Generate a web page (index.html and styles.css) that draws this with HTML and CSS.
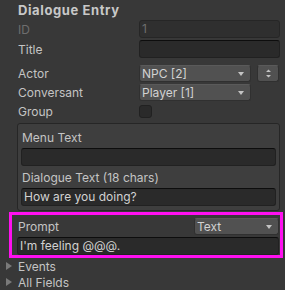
FILE: index.html
```html
<!DOCTYPE html>
<html>
<head>
<meta charset="utf-8">
<link rel="stylesheet" href="styles.css">
</head>
<body>
<div class="panel">
  <div class="header">Dialogue Entry</div>
  <div class="row r-id">
    <div class="label disabled">ID</div>
    <div class="field disabled-field">1</div>
  </div>
  <div class="row r-title">
    <div class="label">Title</div>
    <div class="field"></div>
  </div>
  <div class="row r-actor">
    <div class="label">Actor</div>
    <div class="popup">NPC [2]<span class="arrow"></span></div>
    <div class="spin"><svg width="7" height="9" viewBox="0 0 7 9"><path d="M3.5 0.5 L6 3 L1 3 Z M1 6 L6 6 L3.5 8.5 Z" fill="#c4c4c4"/></svg></div>
  </div>
  <div class="row r-conv">
    <div class="label">Conversant</div>
    <div class="popup">Player [1]<span class="arrow"></span></div>
  </div>
  <div class="row r-group">
    <div class="label">Group</div>
    <div class="check"></div>
  </div>
  <div class="box">
    <div class="blabel">Menu Text</div>
    <div class="field bfield"></div>
    <div class="blabel second">Dialogue Text (18 chars)</div>
    <div class="field bfield">How are you doing?</div>
  </div>
  <div class="highlight">
    <div class="prow">
      <div class="label">Prompt</div>
      <div class="popup small">Text<span class="arrow"></span></div>
    </div>
    <div class="field pfield">I'm feeling @@@.</div>
  </div>
  <div class="fold"><span class="tri"></span>Events</div>
  <div class="fold"><span class="tri"></span>All Fields</div>
</div>
</body>
</html>
```
FILE: styles.css
```css
html, body {
  margin: 0;
  padding: 0;
  background: #383838;
}
body {
  width: 285px;
  height: 290px;
  overflow: hidden;
  font-family: Inter, "Liberation Sans", sans-serif;
  font-size: 12px;
  color: #c4c4c4;
}
.panel {
  display: flex;
  flex-direction: column;
}
.header {
  font-weight: bold;
  font-size: 13px;
  letter-spacing: 0.6px;
  height: 18px;
  line-height: 18px;
  padding-left: 18px;
  margin-top: 1px;
  color: #c8c8c8;
}
.row {
  display: flex;
  align-items: center;
  height: 18px;
  padding-left: 18px;
}
.r-id { margin-top: 1px; }
.r-title { margin-top: 2px; }
.r-actor { margin-top: 6px; }
.r-conv { margin-top: 1px; }
.r-group { margin-top: 3px; height: 15px; }
.label {
  width: 121px;
  flex: none;
}
.label.disabled { color: #6e6e6e; }
.field {
  box-sizing: border-box;
  height: 18px;
  background: #2a2a2a;
  border: 1px solid #212121;
  border-top-color: #0d0d0d;
  border-radius: 3px;
  line-height: 16px;
  padding-left: 2px;
  color: #d2d2d2;
}
.row .field { width: 141px; }
.disabled-field { color: #6e6e6e; background: #2f2f2f; border-color: #262626; }
.popup {
  position: relative;
  box-sizing: border-box;
  width: 112px;
  height: 17px;
  background: #515151;
  border: 1px solid #303030;
  border-top-color: #5a5a5a;
  border-radius: 3px;
  line-height: 15px;
  padding-left: 2px;
  color: #d2d2d2;
}
.arrow {
  position: absolute;
  right: 6px;
  top: 6px;
  width: 0;
  height: 0;
  border-left: 3.5px solid transparent;
  border-right: 3.5px solid transparent;
  border-top: 4px solid #c4c4c4;
}
.spin {
  box-sizing: border-box;
  width: 22px;
  height: 17px;
  margin-left: 6px;
  background: #515151;
  border: 1px solid #303030;
  border-top-color: #5a5a5a;
  border-radius: 3px;
  display: flex;
  align-items: center;
  justify-content: center;
}
.check {
  box-sizing: border-box;
  width: 13px;
  height: 13px;
  background: #2a2a2a;
  border: 1px solid #212121;
  border-radius: 3px;
}
.box {
  margin: 4px 5px 0 17px;
  height: 88px;
  box-sizing: border-box;
  background: #3e3e3e;
  border: 1px solid #262626;
  border-radius: 3px;
  padding: 5px 3px 0 3px;
}
.blabel {
  height: 18px;
  line-height: 18px;
  padding-left: 1px;
}
.blabel.second { margin-top: 3px; }
.bfield { margin-top: 1px; }
.highlight {
  margin: 1px 2px 0 9px;
  height: 46px;
  box-sizing: border-box;
  border: 3px solid #ff10f0;
  padding: 3px 0 0 5px;
}
.prow {
  display: flex;
  justify-content: space-between;
  align-items: center;
  height: 17px;
  padding-left: 1px;
  margin-right: 1px;
}
.prow .label { width: auto; }
.popup.small { width: 85px; }
.pfield { margin-top: 2px; margin-right: 1px; }
.fold {
  display: flex;
  align-items: center;
  height: 16px;
  padding-left: 6px;
}
.tri {
  width: 0;
  height: 0;
  border-top: 4px solid transparent;
  border-bottom: 4px solid transparent;
  border-left: 6px solid #7a7a7a;
  margin-right: 6px;
}
```
